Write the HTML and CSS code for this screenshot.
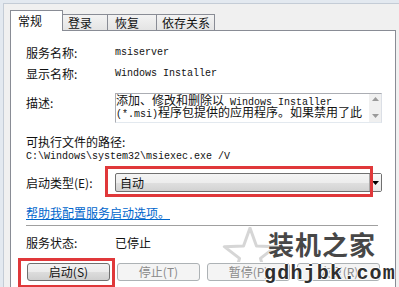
FILE: index.html
```html
<!DOCTYPE html>
<html lang="zh-CN">
<head>
<meta charset="utf-8">
<title>Windows Installer 属性</title>
<link rel="stylesheet" href="styles.css">
</head>
<body>
<div class="frame">
  <div class="tabs">
    <div class="tab active tab-general">常规</div>
    <div class="tab tab-logon">登录</div>
    <div class="tab tab-recovery">恢复</div>
    <div class="tab tab-deps">依存关系</div>
  </div>
  <div class="panel">
    <div class="row row-line">
      <span class="label">服务名称:</span>
      <span class="mono">msiserver</span>
    </div>
    <div class="row row-line">
      <span class="label">显示名称:</span>
      <span class="mono">Windows Installer</span>
    </div>
    <div class="row row-desc">
      <span class="label label-desc">描述:</span>
      <div class="desc-box">
        <div class="desc-text">
          <div class="desc-line">添加、修改和删除以<span class="mono"> Windows Installer</span></div>
          <div class="desc-line"><span class="mono">(*.msi)</span>程序包提供的应用程序。如果禁用了此</div>
        </div>
        <div class="scroll">
          <svg class="arrow" width="7" height="4" viewBox="0 0 7 4"><path d="M0 4 L3.5 0 L7 4 Z" fill="#9a9a9a"/></svg>
          <svg class="arrow" width="7" height="4" viewBox="0 0 7 4"><path d="M0 0 L3.5 4 L7 0 Z" fill="#9a9a9a"/></svg>
        </div>
      </div>
    </div>
    <div class="path-label">可执行文件的路径:</div>
    <div class="path mono">C:\Windows\system32\msiexec.exe /V</div>
    <div class="row row-start">
      <span class="label">启动类型(E):</span>
      <div class="combo">
        <span class="combo-val">自动</span>
        <span class="combo-btn">
          <svg width="7" height="4" viewBox="0 0 7 4"><path d="M0 0 L3.5 4 L7 0 Z" fill="#000"/></svg>
        </span>
      </div>
      <div class="mark mark-combo"></div>
    </div>
    <div class="link">帮助我配置服务启动选项。</div>
    <div class="sep"></div>
    <div class="row row-status">
      <span class="label">服务状态:</span>
      <span>已停止</span>
    </div>
    <div class="btns">
      <div class="btn">启动(S)</div>
      <div class="btn disabled">停止(T)</div>
      <div class="btn disabled">暂停(P)</div>
      <div class="btn disabled">恢复(R)</div>
      <div class="mark mark-btn"></div>
    </div>
  </div>
</div>
<div class="wm">
  <svg class="wm-star" width="56" height="35" viewBox="0 0 56 35">
    <path d="M28 1 L34.47 19.1 L53.68 19.66 L38.46 31.4 L43.87 49.84 L28 39 L12.13 49.84 L17.54 31.4 L2.32 19.66 L21.53 19.1 Z" fill="none" stroke="#d6d6d6" stroke-width="3" stroke-linejoin="round"/>
  </svg>
  <div class="wm-cn">装机之家</div>
  <div class="wm-en">gdhjbk.com</div>
</div>
</body>
</html>
```
FILE: styles.css
```css
html, body {
  margin: 0;
  padding: 0;
}
body {
  position: relative;
  width: 399px;
  height: 287px;
  overflow: hidden;
  background: #e3e9f0;
  font-family: "Noto Sans CJK SC", "Noto Sans", sans-serif;
  font-size: 12px;
  color: #111;
}
.frame {
  box-sizing: border-box;
  height: 284px;
  margin: 3px 0 0 3px;
  border-left: 1px solid #c4ccd6;
  border-top: 1px solid #c4ccd6;
  background: #f0f0f0;
  padding: 6px 3px 0 6px;
  display: flex;
  flex-direction: column;
}
.tabs {
  display: flex;
  align-items: flex-end;
  height: 21px;
  margin-bottom: -1px;
  position: relative;
  z-index: 1;
}
.tab {
  box-sizing: border-box;
  height: 16px;
  margin-bottom: 1px;
  margin-left: -1px;
  border: 1px solid #898c95;
  border-bottom: none;
  background: linear-gradient(#f3f3f3, #e4e4e4);
  line-height: 15px;
  padding-left: 5px;
  white-space: nowrap;
}
.tab.active {
  height: 21px;
  margin-bottom: 0;
  margin-left: 0;
  background: #fff;
  line-height: 20px;
  padding-left: 7px;
}
.tab-general { width: 53px; }
.tab-logon { width: 46px; }
.tab-recovery { width: 50px; padding-left: 7px; }
.tab-deps { width: 59px; }

.panel {
  flex: 1;
  background: #fff;
  border: 1px solid #898c95;
  border-bottom: none;
  padding: 11px 13px 0 15px;
  display: flex;
  flex-direction: column;
}
.row {
  display: grid;
  grid-template-columns: 89px 1fr;
  align-items: center;
  position: relative;
}
.row-line {
  height: 21px;
}
.mono {
  font-family: "Liberation Mono", "DejaVu Sans Mono", monospace;
  font-size: 10px;
}
.row-desc {
  margin-top: 9px;
  align-items: start;
}
.label-desc {
  line-height: 20px;
}
.desc-box {
  box-sizing: border-box;
  height: 30px;
  border: 1px solid #abadb3;
  border-right-color: #dbdfe6;
  border-bottom-color: #e3e9ef;
  display: flex;
}
.desc-text {
  flex: 1;
  overflow: hidden;
  line-height: 12px;
  white-space: nowrap;
}
.desc-line {
  height: 12px;
}
.scroll {
  width: 12px;
  background: #f0f0f0;
  display: flex;
  flex-direction: column;
  justify-content: space-between;
  align-items: center;
  padding: 3px 0 4px;
}
.arrow {
  display: block;
}
.path-label {
  margin-top: 11px;
  line-height: 16px;
}
.path {
  line-height: 14px;
}
.row-start {
  margin-top: 9px;
  height: 19px;
}
.combo {
  box-sizing: border-box;
  height: 19px;
  border: 1px solid #707070;
  border-radius: 2px;
  display: flex;
  background: linear-gradient(#f4f4f4 0%, #ededed 50%, #e0e0e0 50%, #d2d2d2 100%);
}
.combo-val {
  flex: 1;
  padding-left: 4px;
  line-height: 17px;
}
.combo-btn {
  width: 11px;
  border-left: 1px solid #a8a8a8;
  background: linear-gradient(#fbfbfb, #e8e8e8);
  display: flex;
  align-items: center;
  justify-content: center;
}
.mark {
  position: absolute;
  box-sizing: border-box;
  border: 3px solid #e0383a;
  pointer-events: none;
}
.mark-combo {
  left: 79px;
  top: -7px;
  width: 268px;
  height: 31px;
}
.link {
  margin-top: 13px;
  line-height: 16px;
  color: #0066cc;
  text-decoration: underline;
}
.sep {
  margin-top: 4px;
  margin-right: 4px;
  border-top: 1px solid #a0a0a0;
}
.row-status {
  margin-top: 9px;
  line-height: 16px;
}
.btns {
  position: relative;
  display: flex;
  gap: 7px;
  margin-top: 12px;
  margin-left: 1px;
}
.btn {
  box-sizing: border-box;
  width: 83px;
  height: 18px;
  border: 1px solid #707070;
  border-radius: 3px;
  background: linear-gradient(#f2f2f2 0%, #ebebeb 50%, #dddddd 50%, #cfcfcf 100%);
  text-align: center;
  line-height: 16px;
}
.btn.disabled {
  border-color: #adb2b5;
  background: #f4f4f4;
  color: #8a8a8a;
}
.mark-btn {
  left: -9px;
  top: -5px;
  width: 97px;
  height: 30px;
}

.wm {
  position: absolute;
  left: 0;
  top: 0;
  width: 399px;
  height: 287px;
  pointer-events: none;
}
.wm-star {
  position: absolute;
  left: 222px;
  top: 227px;
}
.wm-cn {
  position: absolute;
  left: 268px;
  top: 228px;
  font-size: 26px;
  font-weight: 700;
  line-height: 32px;
  letter-spacing: 1px;
  color: #474747;
  text-shadow: 0 0 2px #fff, 0 0 2px #fff;
}
.wm-en {
  position: absolute;
  left: 264px;
  top: 262px;
  font-family: "Liberation Mono", "DejaVu Sans Mono", monospace;
  font-size: 20px;
  font-weight: 700;
  line-height: 24px;
  letter-spacing: 1.2px;
  color: #2e2e2e;
  text-shadow: 1px 0 0 #fff, -1px 0 0 #fff, 0 1px 0 #fff, 0 -1px 0 #fff;
}
```
